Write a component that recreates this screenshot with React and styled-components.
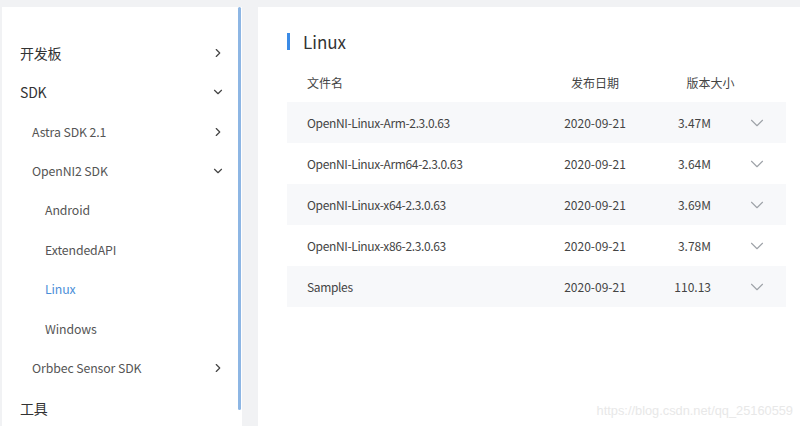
import React from "react";
import styled, { createGlobalStyle } from "styled-components";
import { ChevronRight, ChevronDown } from "lucide-react";

const Global = createGlobalStyle`
  html, body { margin: 0; padding: 0; }
  body {
    background: #f1f2f4;
    font-family: "Noto Sans CJK SC", "Noto Sans", sans-serif;
    overflow: hidden;
  }
`;

const Page = styled.div`
  position: relative;
  width: 800px;
  height: 426px;
  padding: 7px 0 0 2px;
  box-sizing: border-box;
  display: flex;
  gap: 16px;
  background: #f1f2f4;
  overflow: hidden;
`;

const Sidebar = styled.nav`
  position: relative;
  width: 240px;
  flex: none;
  background: #fff;
  padding-top: 26px;
  box-sizing: border-box;
`;

const ScrollThumb = styled.div`
  position: absolute;
  right: 1px;
  top: 0;
  width: 3px;
  height: 403px;
  border-radius: 2px;
  background: #8db6e4;
`;

const Item = styled.div`
  height: 39.45px;
  display: flex;
  align-items: center;
  justify-content: space-between;
  padding-left: ${(p) => (p.$level === 0 ? 18 : p.$level === 1 ? 30 : 43)}px;
  padding-right: 17px;
  box-sizing: border-box;
  font-size: ${(p) => (p.$level === 0 ? 14 : 12.3)}px;
  letter-spacing: ${(p) => (p.$level === 0 ? "-0.2px" : "-0.1px")};
  color: ${(p) => (p.$active ? "#4a8ed8" : p.$level === 0 ? "#333" : "#555")};
  svg { color: #444; }
`;

const Main = styled.main`
  flex: 1;
  background: #fff;
  padding: 24px 14px 0 29px;
  box-sizing: border-box;
`;

const Title = styled.h2`
  margin: 0;
  display: flex;
  align-items: center;
  gap: 13px;
  height: 20px;
  font-size: 17px;
  font-weight: 400;
  color: #333;
  &::before {
    content: "";
    width: 3px;
    height: 17px;
    background: #3b8be6;
  }
`;

const Grid = styled.div`
  display: grid;
  grid-template-columns: 238px 100px 75px 1fr;
  align-items: center;
  padding-left: 20px;
  height: ${(p) => p.$h}px;
  background: ${(p) => (p.$shade ? "#f7f8fa" : "#fff")};
  font-size: 12px;
  color: #444;
`;

const Header = styled(Grid)`
  margin-top: 11px;
`;

const NameCell = styled.div`
  letter-spacing: -0.35px;
`;

const DateCell = styled.div`
  text-align: center;
`;

const SizeCell = styled.div`
  text-align: right;
  padding-right: 9px;
`;

const SizeHead = styled.div`
  grid-column: span 2;
  text-align: center;
  padding-right: 10px;
`;

const Caret = styled.div`
  display: flex;
  padding-left: 26px;
  color: #9ea2a8;
`;

const Watermark = styled.div`
  position: absolute;
  right: 7px;
  bottom: 8px;
  font-family: "Liberation Sans", Arial, sans-serif;
  font-size: 12.8px;
  color: #e8e8e8;
`;

const nav = [
  { label: "开发板", level: 0, icon: "right" },
  { label: "SDK", level: 0, icon: "down" },
  { label: "Astra SDK 2.1", level: 1, icon: "right" },
  { label: "OpenNI2 SDK", level: 1, icon: "down" },
  { label: "Android", level: 2 },
  { label: "ExtendedAPI", level: 2 },
  { label: "Linux", level: 2, active: true },
  { label: "Windows", level: 2 },
  { label: "Orbbec Sensor SDK", level: 1, icon: "right" },
  { label: "工具", level: 0 },
];

const files = [
  ["OpenNI-Linux-Arm-2.3.0.63", "2020-09-21", "3.47M"],
  ["OpenNI-Linux-Arm64-2.3.0.63", "2020-09-21", "3.64M"],
  ["OpenNI-Linux-x64-2.3.0.63", "2020-09-21", "3.69M"],
  ["OpenNI-Linux-x86-2.3.0.63", "2020-09-21", "3.78M"],
  ["Samples", "2020-09-21", "110.13"],
];

export default function App() {
  return (
    <>
      <Global />
      <Page>
        <Sidebar>
          <ScrollThumb />
          {nav.map((n) => (
            <Item key={n.label} $level={n.level} $active={n.active}>
              <span>{n.label}</span>
              {n.icon === "right" && <ChevronRight size={14} strokeWidth={2} />}
              {n.icon === "down" && <ChevronDown size={14} strokeWidth={2} />}
            </Item>
          ))}
        </Sidebar>
        <Main>
          <Title>Linux</Title>
          <Header $h={40}>
            <div>文件名</div>
            <DateCell>发布日期</DateCell>
            <SizeHead>版本大小</SizeHead>
          </Header>
          {files.map((f, i) => (
            <Grid key={f[0]} $h={41} $shade={i % 2 === 0}>
              <NameCell>{f[0]}</NameCell>
              <DateCell>{f[1]}</DateCell>
              <SizeCell>{f[2]}</SizeCell>
              <Caret>
                <ChevronDown size={22} strokeWidth={1.2} />
              </Caret>
            </Grid>
          ))}
        </Main>
        <Watermark>https://blog.csdn.net/qq_25160559</Watermark>
      </Page>
    </>
  );
}
